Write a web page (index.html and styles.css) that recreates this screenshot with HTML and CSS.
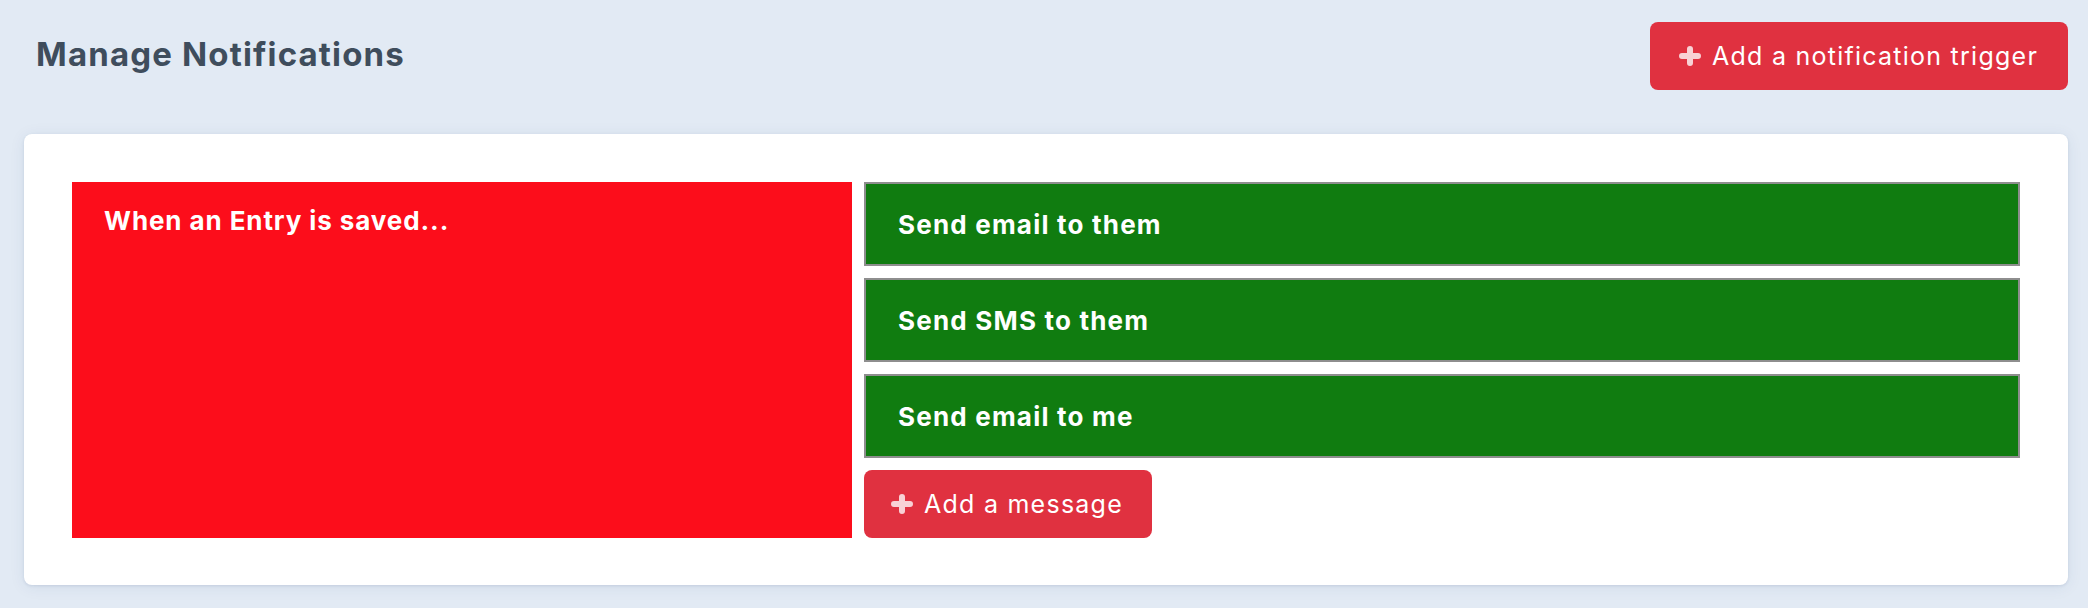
FILE: index.html
```html
<!DOCTYPE html>
<html lang="en">
<head>
<meta charset="utf-8">
<title>Manage Notifications</title>
<link rel="stylesheet" href="styles.css">
</head>
<body>
<div class="page">
  <header class="header">
    <h1 class="title">Manage Notifications</h1>
    <button class="btn btn-trigger" type="button">
      <svg class="plus" viewBox="0 0 22 20" aria-hidden="true"><path d="M11 3v14M3 10h16"/></svg>
      <span>Add a notification trigger</span>
    </button>
  </header>
  <section class="card">
    <div class="trigger-row">
      <div class="trigger">When an Entry is saved...</div>
      <div class="messages">
        <div class="message">Send email to them</div>
        <div class="message">Send SMS to them</div>
        <div class="message">Send email to me</div>
        <button class="btn btn-message" type="button">
          <svg class="plus" viewBox="0 0 22 20" aria-hidden="true"><path d="M11 3v14M3 10h16"/></svg>
          <span>Add a message</span>
        </button>
      </div>
    </div>
  </section>
</div>
</body>
</html>
```
FILE: styles.css
```css
* { box-sizing: border-box; }
html, body { margin: 0; padding: 0; }
body {
  background: #e2eaf4;
  font-family: Inter, "Noto Sans", "Liberation Sans", sans-serif;
  width: 2088px;
  height: 608px;
  overflow: hidden;
}
.page { padding: 22px 20px 0 24px; }
.header {
  display: flex;
  justify-content: space-between;
  align-items: flex-start;
  height: 68px;
  margin-bottom: 44px;
}
.title {
  margin: 12px 0 0 12px;
  font-size: 33px;
  line-height: 40px;
  font-weight: 700;
  letter-spacing: 1.15px;
  color: #3f4d5c;
}
.btn {
  display: inline-flex;
  align-items: center;
  gap: 11px;
  height: 68px;
  border: 0;
  border-radius: 8px;
  background: #e03140;
  color: #fff;
  font-family: inherit;
  font-size: 25px;
  font-weight: 400;
  letter-spacing: 1.25px;
  cursor: pointer;
  white-space: nowrap;
}
.btn-trigger { width: 418px; padding: 0 28px 0 29px; }
.btn-message { width: 288px; padding: 0 26px 0 27px; }
.plus {
  width: 22px;
  height: 20px;
  flex: none;
}
.plus path {
  stroke: rgba(255, 255, 255, 0.78);
  stroke-width: 6;
  stroke-linecap: round;
  fill: none;
}
.card {
  background: #fff;
  border-radius: 8px;
  box-shadow: 0 1px 3px rgba(40, 70, 120, 0.12), 0 2px 16px rgba(40, 70, 120, 0.08);
  padding: 48px 48px 47px;
}
.trigger-row {
  display: flex;
  gap: 12px;
  align-items: stretch;
}
.trigger {
  flex: 0 0 780px;
  background: #fc0d1b;
  color: #fff;
  font-size: 26px;
  font-weight: 700;
  letter-spacing: 0.9px;
  line-height: 30px;
  padding: 24px 32px;
}
.messages {
  flex: 1;
  display: flex;
  flex-direction: column;
  gap: 12px;
  align-items: flex-start;
}
.message {
  align-self: stretch;
  height: 84px;
  display: flex;
  align-items: center;
  padding: 0 32px;
  background: #107c10;
  border: 2px solid #8e8e8e;
  color: #fff;
  font-size: 26px;
  font-weight: 700;
  letter-spacing: 1.2px;
}
```
